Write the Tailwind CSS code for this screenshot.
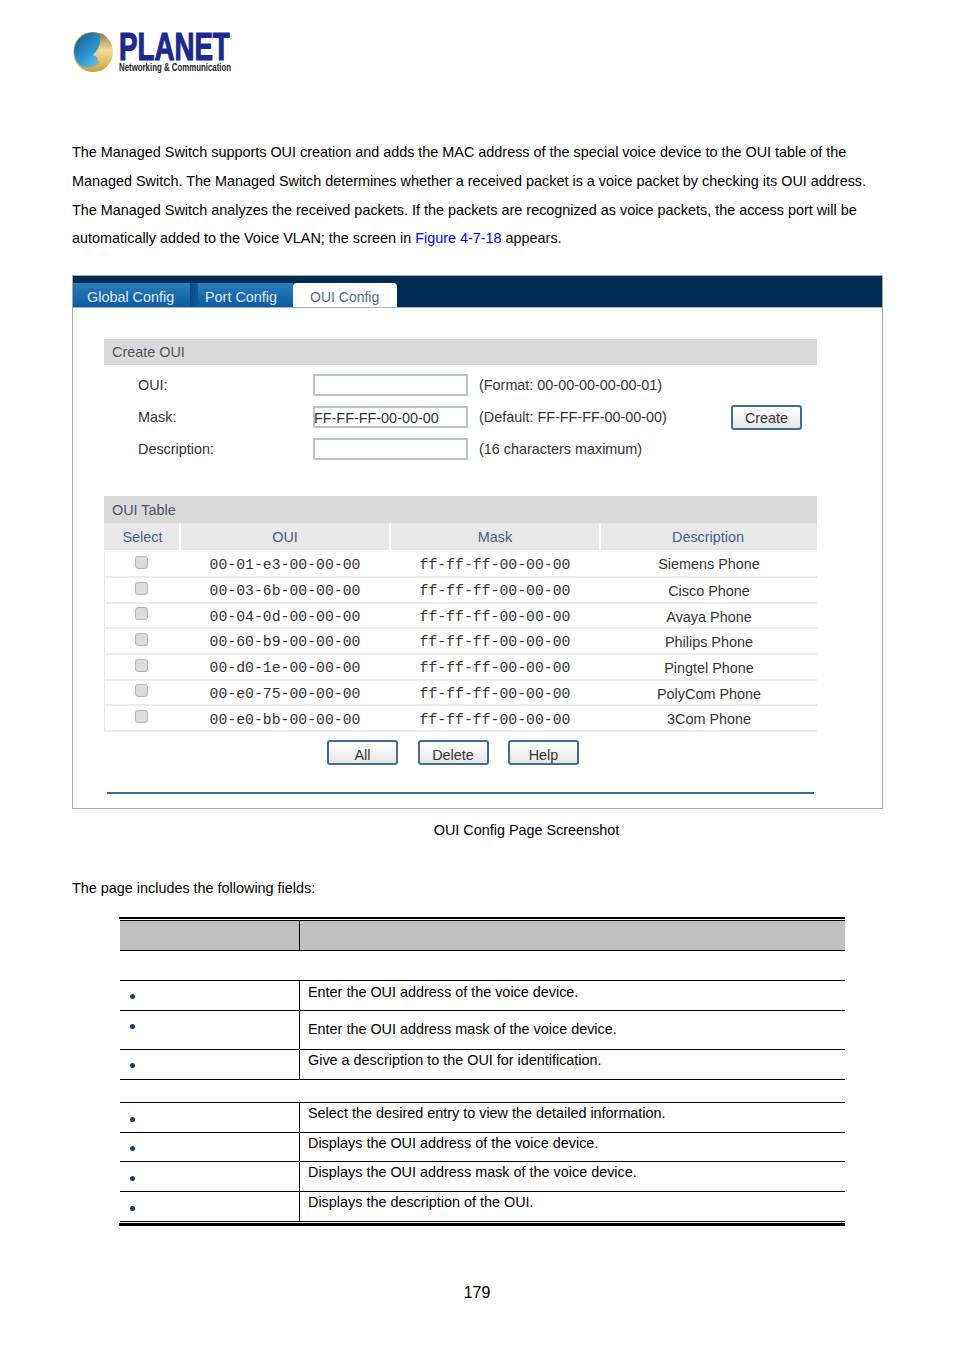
<!DOCTYPE html>
<html lang="en">
  <head>
    <meta charset="UTF-8" />
    <title>OUI Config</title>
    <script src="https://cdn.jsdelivr.net/npm/@tailwindcss/browser@4"></script>
  </head>
  <body class="bg-white text-black font-['Liberation_Sans',Arial,sans-serif] text-[14.4px]">
    <div class="w-[954px] h-[1350px] overflow-hidden">

      <!-- logo -->
      <div class="h-[138px] pt-[30px] pl-[72px] flex items-start">
        <svg class="w-[42px] h-[44px]" viewBox="0 0 42 44">
          <defs>
            <linearGradient id="sea" x1="0" y1="0" x2="1" y2="1">
              <stop offset="0" stop-color="#16507f" />
              <stop offset="0.5" stop-color="#2f9ad6" />
              <stop offset="1" stop-color="#a8d8ee" />
            </linearGradient>
            <linearGradient id="gold" x1="0" y1="0" x2="0" y2="1">
              <stop offset="0" stop-color="#8a7a4e" />
              <stop offset="0.45" stop-color="#f4de96" />
              <stop offset="1" stop-color="#c9a040" />
            </linearGradient>
          </defs>
          <circle cx="21" cy="22" r="20" fill="url(#gold)" />
          <circle cx="20.5" cy="21.5" r="18.5" fill="url(#sea)" />
          <path d="M29 3 C27 8 29 12 27 16 C26 20 23 23 21 25 L25 27 C26 29 24 30 27 32 C26 36 17 38 10 37 C15 42 28 44 35 36 C43 26 40 9 29 3Z" fill="url(#gold)" />
        </svg>
        <div class="ml-[5px] w-[112px] mt-[-1px]">
          <div class="font-bold text-[39px] leading-[36px] text-[#1b2a8c] [-webkit-text-stroke:1.2px_#1b2a8c] whitespace-nowrap origin-left scale-x-[.71]">PLANET</div>
          <div class="font-bold text-[10px] leading-[10px] mt-[-2px] text-[#222] whitespace-nowrap origin-left scale-x-[.785]">Networking &amp; Communication</div>
        </div>
      </div>

      <!-- intro -->
      <p class="ml-[72px] w-[810px] leading-[28.8px]">
        The Managed Switch supports OUI creation and adds the MAC address of the special voice device to the OUI table of the<br />
        Managed Switch. The Managed Switch determines whether a received packet is a voice packet by checking its OUI address.<br />
        The Managed Switch analyzes the received packets. If the packets are recognized as voice packets, the access port will be<br />
        automatically added to the Voice VLAN; the screen in <span class="text-[#0000ff]">Figure 4-7-18</span> appears.
      </p>

      <!-- screenshot -->
      <div class="ml-[72px] mt-[22px] w-[811px] h-[534px] border border-[#a9a9a9] text-[#333]">
        <div class="h-[31px] bg-[#002c54] flex items-end">
          <div class="w-[117px] h-[24px] bg-gradient-to-b from-[#2a7db6] to-[#0a5ca2] text-[#dfeaf2] pl-[14px] leading-[28px]">Global Config</div>
          <div class="w-[8px] h-[24px] bg-gradient-to-r from-[#0b4a80] to-[#0a5ca2]"></div>
          <div class="w-[95px] h-[24px] bg-gradient-to-b from-[#2a7db6] to-[#0a5ca2] text-[#dfeaf2] pl-[7px] leading-[28px]">Port Config</div>
          <div class="w-[104px] h-[24px] bg-white rounded-t-[4px] text-[#4f6b88] text-[14px] pl-[17px] leading-[28px]">OUI Config</div>
        </div>
        <div class="border-t border-[#9fb3c4] pl-[31px] pr-[65px] pt-[31px]">

          <div class="h-[26px] bg-[#d9d9d9] pl-[8px] leading-[27px] text-[#4a5568]">Create OUI</div>

          <div class="mt-[9px] h-[22px] flex items-center">
            <span class="w-[209px] pl-[34px] pt-[1px]">OUI:</span>
            <div class="w-[155px] h-[22px] border-2 border-[#b3c2d6]"></div>
            <span class="ml-[11px] pt-[1px]">(Format: 00-00-00-00-00-01)</span>
          </div>
          <div class="mt-[10px] h-[22px] flex items-center">
            <span class="w-[209px] pl-[34px] pt-[1px]">Mask:</span>
            <div class="w-[155px] h-[22px] border-2 border-[#b3c2d6] leading-[20px] whitespace-nowrap indent-[-1px]">FF-FF-FF-00-00-00</div>
            <span class="ml-[11px] w-[252px] pt-[1px]">(Default: FF-FF-FF-00-00-00)</span>
            <button class="w-[71px] h-[25px] border-2 border-[#3f6d95] rounded-[3px] bg-gradient-to-b from-white to-[#e6e6e6] leading-[22px]">Create</button>
          </div>
          <div class="mt-[10px] h-[22px] flex items-center">
            <span class="w-[209px] pl-[34px] pt-[2px]">Description:</span>
            <div class="w-[155px] h-[22px] border-2 border-[#b3c2d6]"></div>
            <span class="ml-[11px] pt-[2px]">(16 characters maximum)</span>
          </div>

          <div class="mt-[36px] h-[27px] bg-[#d9d9d9] pl-[8px] leading-[28px] text-[#4a5568]">OUI Table</div>

          <div class="h-[27px] bg-[#e8e8e8] grid grid-cols-[77px_210px_210px_216px] text-center text-[#4a5a8c] leading-[28px]">
            <div class="border-r-2 border-white pl-[2px]">Select</div>
            <div class="border-r-2 border-white">OUI</div>
            <div class="border-r-2 border-white">Mask</div>
            <div class="pr-[2px]">Description</div>
          </div>

          <div class="mt-[2px] border-l border-[#e8e8e8]">
            <div class="h-[25.7px] border-b-2 border-[#ececec] grid grid-cols-[75px_210px_210px_218px] text-center items-center">
              <div class="pl-[1px] pr-[4px] flex justify-center"><input type="checkbox" class="appearance-none w-[13px] h-[13px] mb-[4px] rounded-[3px] bg-[#dcdcdc] border border-[#b5b5b5]" /></div>
              <div class="font-['Liberation_Mono',monospace] text-[14.8px] pt-[2px]">00-01-e3-00-00-00</div>
              <div class="font-['Liberation_Mono',monospace] text-[14.8px] pt-[2px]">ff-ff-ff-00-00-00</div>
              <div class="pt-[1px]">Siemens Phone</div>
            </div>
            <div class="h-[25.7px] border-b-2 border-[#ececec] grid grid-cols-[75px_210px_210px_218px] text-center items-center">
              <div class="pl-[1px] pr-[4px] flex justify-center"><input type="checkbox" class="appearance-none w-[13px] h-[13px] mb-[4px] rounded-[3px] bg-[#dcdcdc] border border-[#b5b5b5]" /></div>
              <div class="font-['Liberation_Mono',monospace] text-[14.8px] pt-[2px]">00-03-6b-00-00-00</div>
              <div class="font-['Liberation_Mono',monospace] text-[14.8px] pt-[2px]">ff-ff-ff-00-00-00</div>
              <div class="pt-[3px]">Cisco Phone</div>
            </div>
            <div class="h-[25.7px] border-b-2 border-[#ececec] grid grid-cols-[75px_210px_210px_218px] text-center items-center">
              <div class="pl-[1px] pr-[4px] flex justify-center"><input type="checkbox" class="appearance-none w-[13px] h-[13px] mb-[4px] rounded-[3px] bg-[#dcdcdc] border border-[#b5b5b5]" /></div>
              <div class="font-['Liberation_Mono',monospace] text-[14.8px] pt-[2px]">00-04-0d-00-00-00</div>
              <div class="font-['Liberation_Mono',monospace] text-[14.8px] pt-[2px]">ff-ff-ff-00-00-00</div>
              <div class="pt-[3px]">Avaya Phone</div>
            </div>
            <div class="h-[25.7px] border-b-2 border-[#ececec] grid grid-cols-[75px_210px_210px_218px] text-center items-center">
              <div class="pl-[1px] pr-[4px] flex justify-center"><input type="checkbox" class="appearance-none w-[13px] h-[13px] mb-[4px] rounded-[3px] bg-[#dcdcdc] border border-[#b5b5b5]" /></div>
              <div class="font-['Liberation_Mono',monospace] text-[14.8px] pt-[2px]">00-60-b9-00-00-00</div>
              <div class="font-['Liberation_Mono',monospace] text-[14.8px] pt-[2px]">ff-ff-ff-00-00-00</div>
              <div class="pt-[3px]">Philips Phone</div>
            </div>
            <div class="h-[25.7px] border-b-2 border-[#ececec] grid grid-cols-[75px_210px_210px_218px] text-center items-center">
              <div class="pl-[1px] pr-[4px] flex justify-center"><input type="checkbox" class="appearance-none w-[13px] h-[13px] mb-[4px] rounded-[3px] bg-[#dcdcdc] border border-[#b5b5b5]" /></div>
              <div class="font-['Liberation_Mono',monospace] text-[14.8px] pt-[2px]">00-d0-1e-00-00-00</div>
              <div class="font-['Liberation_Mono',monospace] text-[14.8px] pt-[2px]">ff-ff-ff-00-00-00</div>
              <div class="pt-[3px]">Pingtel Phone</div>
            </div>
            <div class="h-[25.7px] border-b-2 border-[#ececec] grid grid-cols-[75px_210px_210px_218px] text-center items-center">
              <div class="pl-[1px] pr-[4px] flex justify-center"><input type="checkbox" class="appearance-none w-[13px] h-[13px] mb-[4px] rounded-[3px] bg-[#dcdcdc] border border-[#b5b5b5]" /></div>
              <div class="font-['Liberation_Mono',monospace] text-[14.8px] pt-[2px]">00-e0-75-00-00-00</div>
              <div class="font-['Liberation_Mono',monospace] text-[14.8px] pt-[2px]">ff-ff-ff-00-00-00</div>
              <div class="pt-[3px]">PolyCom Phone</div>
            </div>
            <div class="h-[25.7px] border-b-2 border-[#ececec] grid grid-cols-[75px_210px_210px_218px] text-center items-center">
              <div class="pl-[1px] pr-[4px] flex justify-center"><input type="checkbox" class="appearance-none w-[13px] h-[13px] mb-[4px] rounded-[3px] bg-[#dcdcdc] border border-[#b5b5b5]" /></div>
              <div class="font-['Liberation_Mono',monospace] text-[14.8px] pt-[2px]">00-e0-bb-00-00-00</div>
              <div class="font-['Liberation_Mono',monospace] text-[14.8px] pt-[2px]">ff-ff-ff-00-00-00</div>
              <div class="pt-[3px]">3Com Phone</div>
            </div>
          </div>

          <div class="mt-[8px] pl-[223px] flex gap-[19.5px]">
            <button class="w-[71px] h-[25px] border-2 border-[#3f6d95] rounded-[3px] bg-gradient-to-b from-white to-[#e6e6e6] leading-[27px]">All</button>
            <button class="w-[71px] h-[25px] border-2 border-[#3f6d95] rounded-[3px] bg-gradient-to-b from-white to-[#e6e6e6] leading-[27px]">Delete</button>
            <button class="w-[71px] h-[25px] border-2 border-[#3f6d95] rounded-[3px] bg-gradient-to-b from-white to-[#e6e6e6] leading-[27px]">Help</button>
          </div>
          <div class="mt-[27px] ml-[3px] w-[707px] h-[2px] bg-[#2f6d9d]"></div>
        </div>
      </div>

      <p class="mt-[11px] h-[20px] leading-[20px] text-center w-[1053px]">OUI Config Page Screenshot</p>
      <p class="mt-[38px] ml-[72px] h-[20px] leading-[20px]">The page includes the following fields:</p>

      <!-- field table -->
      <div class="mt-[19px] ml-[119px] w-[726px]">
        <div class="h-[2px] bg-black"></div>
        <div class="ml-[1px]">
          <div class="h-[31px] mt-[1px] bg-[#c0c0c0] border-y border-black grid grid-cols-[180px_1fr]">
            <div class="border-r border-black"></div>
          </div>
          <div class="h-[29px]"></div>

          <div class="h-[31px] border-y border-black grid grid-cols-[180px_1fr]">
            <div class="border-r border-black pl-[10px] pt-[13px]"><div class="w-[5px] h-[5px] rounded-full bg-[#123f66]"></div></div>
            <div class="pl-[8px] leading-[20px] pt-[1px]">Enter the OUI address of the voice device.</div>
          </div>
          <div class="h-[39px] border-b border-black grid grid-cols-[180px_1fr]">
            <div class="border-r border-black pl-[10px] pt-[13px]"><div class="w-[5px] h-[5px] rounded-full bg-[#123f66]"></div></div>
            <div class="pl-[8px] pt-[8px] leading-[20px]">Enter the OUI address mask of the voice device.</div>
          </div>
          <div class="h-[30px] border-b border-black grid grid-cols-[180px_1fr]">
            <div class="border-r border-black pl-[10px] pt-[13px]"><div class="w-[5px] h-[5px] rounded-full bg-[#123f66]"></div></div>
            <div class="pl-[8px] leading-[20px]">Give a description to the OUI for identification.</div>
          </div>
          <div class="h-[22px]"></div>

          <div class="h-[31px] border-y border-black grid grid-cols-[180px_1fr]">
            <div class="border-r border-black pl-[10px] pt-[14px]"><div class="w-[5px] h-[5px] rounded-full bg-[#123f66]"></div></div>
            <div class="pl-[8px] leading-[20px]">Select the desired entry to view the detailed information.</div>
          </div>
          <div class="h-[29px] border-b border-black grid grid-cols-[180px_1fr]">
            <div class="border-r border-black pl-[10px] pt-[13px]"><div class="w-[5px] h-[5px] rounded-full bg-[#123f66]"></div></div>
            <div class="pl-[8px] leading-[20px]">Displays the OUI address of the voice device.</div>
          </div>
          <div class="h-[30px] border-b border-black grid grid-cols-[180px_1fr]">
            <div class="border-r border-black pl-[10px] pt-[14px]"><div class="w-[5px] h-[5px] rounded-full bg-[#123f66]"></div></div>
            <div class="pl-[8px] leading-[20px]">Displays the OUI address mask of the voice device.</div>
          </div>
          <div class="h-[30px] border-b border-black grid grid-cols-[180px_1fr]">
            <div class="border-r border-black pl-[10px] pt-[14px]"><div class="w-[5px] h-[5px] rounded-full bg-[#123f66]"></div></div>
            <div class="pl-[8px] leading-[20px]">Displays the description of the OUI.</div>
          </div>
        </div>
        <div class="h-[3px] mt-[1px] bg-black"></div>
      </div>

      <p class="mt-[57px] text-center text-[16px] leading-[20px]">179</p>
    </div>
  </body>
</html>
